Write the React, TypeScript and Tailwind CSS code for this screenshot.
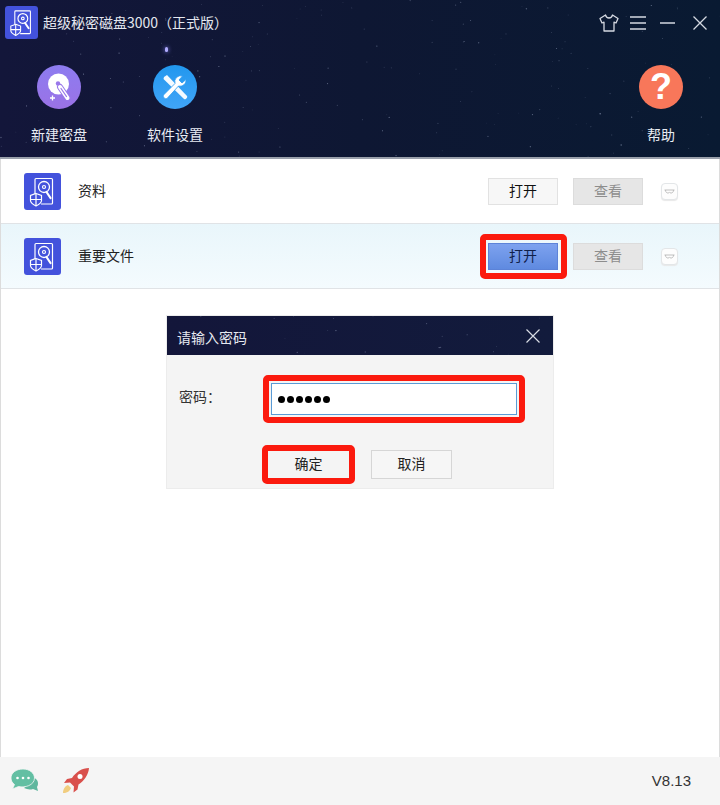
const FONT = "font-['Noto_Sans_CJK_SC','Noto_Sans',sans-serif]";

// fixed pseudo random star field so every render is the same
function Stars({ width, height, count, seed }: { width: number; height: number; count: number; seed: number }) {
  let s = seed;
  const rnd = () => {
    s = (s * 16807) % 2147483647;
    return s / 2147483647;
  };
  const stars = Array.from({ length: count }, () => ({
    x: rnd() * width,
    y: rnd() * height,
    r: 0.3 + rnd() * 0.4,
    o: 0.15 + rnd() * 0.4,
  }));
  return (
    <svg className="absolute inset-0 pointer-events-none" width={width} height={height}>
      {stars.map((d, i) => (
        <circle key={i} cx={d.x} cy={d.y} r={d.r} fill="#c8d4f0" opacity={d.o} />
      ))}
    </svg>
  );
}

function DiskIcon({ size, rounded }: { size: number; rounded: string }) {
  return (
    <div className={`shrink-0 bg-[#4352dc] ${rounded}`} style={{ width: size, height: size }}>
      <svg viewBox="0 0 37 37" width={size} height={size} fill="none" stroke="#fff" strokeWidth="1.2">
        <path d="M11 21V6.5a1 1 0 0 1 1-1h15.500a1 1 0 0 1 1 1V30a1 1 0 0 1-1 1H17" />
        <circle cx="20" cy="14" r="5.500" strokeWidth="1.300" />
        <circle cx="20" cy="14" r="1.500" />
        <path d="M22.500 19l4 6" strokeWidth="2.200" strokeLinecap="round" />
        <path d="M12 20.500l5.500 2v5c0 2.500-2.500 4-5.500 5.500-3-1.500-5.500-3-5.500-5.500v-5z" fill="#4352dc" />
        <path d="M12 21v12M6.500 26.500h11" />
      </svg>
    </div>
  );
}

function ToolItem({ label, children, className }: { label: string; children: React.ReactNode; className: string }) {
  return (
    <div className="flex flex-col items-center w-[80px]">
      <div className={`w-11 h-11 rounded-full flex items-center justify-center ${className}`}>{children}</div>
      <span className="mt-[16px] text-[14px] leading-[18px] text-[#e8ecf4]">{label}</span>
    </div>
  );
}

function Row({ name, active }: { name: string; active?: boolean }) {
  return (
    <div
      className={`h-[65px] flex items-center pl-[23px] border-b border-[#e0e3e6] ${
        active ? "bg-gradient-to-b from-[#e9f6fb] to-[#f4fbfe]" : "bg-white"
      }`}
    >
      <DiskIcon size={37} rounded="rounded-[3px]" />
      <span className="ml-[17px] pb-[2px] text-[14px] text-[#222] flex-1">{name}</span>
      <div className="relative">
        <button
          className={`block w-[70px] h-[27px] pb-[2px] text-[14px] leading-none border ${
            active
              ? "bg-gradient-to-b from-[#7da2ef] to-[#5f8ae0] border-[#5c83d8] text-[#10204a]"
              : "bg-[#f7f7f7] border-[#e2e2e2] text-[#111]"
          }`}
        >
          打开
        </button>
        {active && <div className="absolute -left-[8px] -right-[9px] -inset-y-[9px] border-[6px] border-[#fb1a0e] rounded-[5px]" />}
      </div>
      <button className="ml-[15px] w-[70px] h-[27px] pb-[2px] text-[14px] leading-none bg-[#e6e6e6] border border-[#dcdcdc] text-[#8d8d8d]">
        查看
      </button>
      <div className="ml-[18px] mr-[41px] w-[17px] h-[17px] rounded-[4px] border border-[#e3e6e8] bg-[#fdfdfd] shadow-[0_1px_1px_#e8e8e8]">
        <svg width="15" height="15" viewBox="0 0 15 15" fill="none" stroke="#b8b8b8" strokeWidth="0.900">
          <path d="M2.500 6h10M3.500 6c0 2.500 1.500 3 2.500 3s1.500-1 1.500-1 .5 1 1.500 1 2.500-.5 2.500-3" />
        </svg>
      </div>
    </div>
  );
}

export default function App() {
  return (
    <div className={`w-[720px] h-[805px] flex flex-col bg-white overflow-hidden ${FONT}`}>
      <header className="relative h-[159px] shrink-0 bg-gradient-to-r from-[#13163a] via-[#0e1733] to-[#091a32] border-b-2 border-[#9aa0ab]">
        <Stars width={720} height={157} count={170} seed={4711} />
        <div className="absolute left-[165px] top-[47px] w-[3px] h-[5px] rounded-full bg-[#b0acff] shadow-[0_0_4px_#8f8bff]" />
        <div className="relative h-[65px] flex items-start pt-[6px] pl-[5px] pr-[13px]">
          <DiskIcon size={33} rounded="rounded-[3px]" />
          <span className="ml-[5px] mt-[6px] text-[14px] leading-[21px] text-[#e4e7ef]">超级秘密磁盘3000（正式版）</span>
          <div className="ml-auto mt-[8px] flex items-center text-[#d5d9e2]">
            <svg width="20" height="18" viewBox="0 0 20 18" fill="none" stroke="currentColor" strokeWidth="1.300" strokeLinejoin="round">
              <path d="M6.500 1L1 4.500 3 9l2-.8V17h10V8.200l2 .8 2-4.500L13.500 1c-.5 2-1.800 3-3.500 3S7 3 6.500 1z" />
            </svg>
            <svg className="ml-[11px]" width="16" height="16" viewBox="0 0 16 16" stroke="currentColor" strokeWidth="1.300">
              <path d="M0 2h16M0 8h16M0 14h16" />
            </svg>
            <svg className="ml-[14px]" width="15" height="16" viewBox="0 0 15 16" stroke="currentColor" strokeWidth="1.500">
              <path d="M0 8h15" />
            </svg>
            <svg className="ml-[18px]" width="14" height="14" viewBox="0 0 14 14" stroke="currentColor" strokeWidth="1.300">
              <path d="M.5.500l13 13M13.500.500l-13 13" />
            </svg>
          </div>
        </div>
        <div className="relative flex pl-[19px] pr-[19px]">
          <ToolItem label="新建密盘" className="bg-gradient-to-b from-[#8d7cf0] to-[#9a72e6]">
            <svg width="34" height="34" viewBox="0 0 34 34">
              <circle cx="16.500" cy="14" r="10.500" fill="#fff" />
              <circle cx="16" cy="13.500" r="2.200" fill="#9a78ea" />
              <path d="M18 17l7.500 11" stroke="#9a78ea" strokeWidth="6" strokeLinecap="round" />
              <path d="M18 17l7.500 11" stroke="#fff" strokeWidth="4" strokeLinecap="round" />
              <path d="M19 18.500l5.500 8" stroke="#9a78ea" strokeWidth="1.300" strokeLinecap="round" />
              <path d="M8 28h5M10.500 25.500v5" stroke="#fff" strokeWidth="1.300" />
            </svg>
          </ToolItem>
          <div className="ml-[36px]">
            <ToolItem label="软件设置" className="bg-gradient-to-b from-[#2097ee] to-[#40a5f8]">
              <svg width="32" height="32" viewBox="0 0 32 32">
                <path d="M5 6l3-2 20 21c1 1.500-1.500 4-3 3L4.500 8z" fill="#fff" opacity="0.95" />
                <path d="M27 8.500l-4 3.500-3-3 3.500-4a6 6 0 0 0-7.500 7.500L4.500 24c-1 2 1.500 4.500 3.500 3.500L19.500 15A6 6 0 0 0 27 8.500z" fill="#fff" stroke="#2c9bf0" strokeWidth="0.800" />
              </svg>
            </ToolItem>
          </div>
          <div className="ml-auto">
            <ToolItem label="帮助" className="bg-[#f8775a]">
              <span className="text-[36px] leading-none font-['Liberation_Sans',sans-serif] font-bold text-white">?</span>
            </ToolItem>
          </div>
        </div>
      </header>

      <main className="flex-1 flex flex-col border-x border-[#dcdcdc]">
        <Row name="资料" />
        <Row name="重要文件" active />
        <section className="mt-[27px] mx-auto w-[386px] h-[172px] flex flex-col bg-[#f4f4f4] shadow-[0_0_0_1px_#ececec]">
          <div className="relative h-[39px] shrink-0 bg-gradient-to-r from-[#13163a] to-[#121b3c] flex items-center justify-between pl-[10px] pr-[13px]">
            <Stars width={386} height={39} count={22} seed={977} />
            <span className="relative text-[14px] mt-[4px] text-[#e6e9f0]">请输入密码</span>
            <svg className="relative" width="14" height="14" viewBox="0 0 14 14" stroke="#d8dce4" strokeWidth="1.200">
              <path d="M.5.500l13 13M13.500.500l-13 13" />
            </svg>
          </div>
          <div className="flex items-center mt-[28px] pl-[12px]">
            <span className="w-[92px] -mt-[6px] text-[14px] text-[#333]">密码：</span>
            <div className="relative">
              <div className="w-[246px] h-[32px] bg-white border border-[#5a9bd6] flex items-center pl-[6px] gap-[2px]">
                {[0, 1, 2, 3, 4, 5].map((i) => (
                  <span key={i} className="w-[7px] h-[7px] rounded-full bg-black" />
                ))}
              </div>
              <div className="absolute -inset-[8px] border-[6px] border-[#fb1a0e] rounded-[5px]" />
            </div>
          </div>
          <div className="flex items-center mt-[35px] pl-[101px]">
            <div className="relative">
              <button className="block w-[81px] h-[29px] pb-[4px] text-[14px] leading-none text-[#222] bg-[#f4f4f4]">确定</button>
              <div className="absolute -inset-x-[6px] -inset-y-[5px] border-[6px] border-[#fb1a0e] rounded-[5px]" />
            </div>
            <button className="ml-[22px] w-[81px] h-[29px] pb-[4px] text-[14px] leading-none text-[#222] bg-[#f6f6f6] border border-[#d6d6d6]">取消</button>
          </div>
        </section>
      </main>

      <footer className="h-[48px] shrink-0 bg-[#f5f5f5] flex items-center pl-[10px] pr-[29px]">
        <svg width="30" height="26" viewBox="0 0 30 26">
          <path d="M24 10c4 1 5 6 3 9l1 4-5-2c-3 1-6 .5-9-1z" fill="#5fb79e" />
          <path d="M13 1C6 1 1 5 1 10c0 3 1.500 5 3.500 6.500L2.500 21l6-2.500c6 1.500 16-1 16-8.500 0-5-5-9-11.500-9z" fill="#63bfa3" stroke="#f5f5f5" strokeWidth="0.800" />
          <circle cx="7.500" cy="10" r="1.300" fill="#fff" />
          <circle cx="13" cy="10" r="1.300" fill="#fff" />
          <circle cx="18.500" cy="10" r="1.300" fill="#fff" />
        </svg>
        <svg className="ml-[20px]" width="30" height="28" viewBox="0 0 30 28">
          <path d="M3 26c0-4 2-7 5-8l3 3c-1 3-4 5-8 5z" fill="#f1cd7f" />
          <path d="M29 1c-7 0-13 4-17 10l-5 1-3 4 6-.5 4 4-.5 6 4-3 1-5c6-4 10-10 10.500-16.500z" fill="#d9504c" />
          <circle cx="20" cy="9.500" r="2.500" fill="#fff" />
        </svg>
        <span className="ml-auto text-[15px] text-[#333] font-['Liberation_Sans',sans-serif]">V8.13</span>
      </footer>
    </div>
  );
}
